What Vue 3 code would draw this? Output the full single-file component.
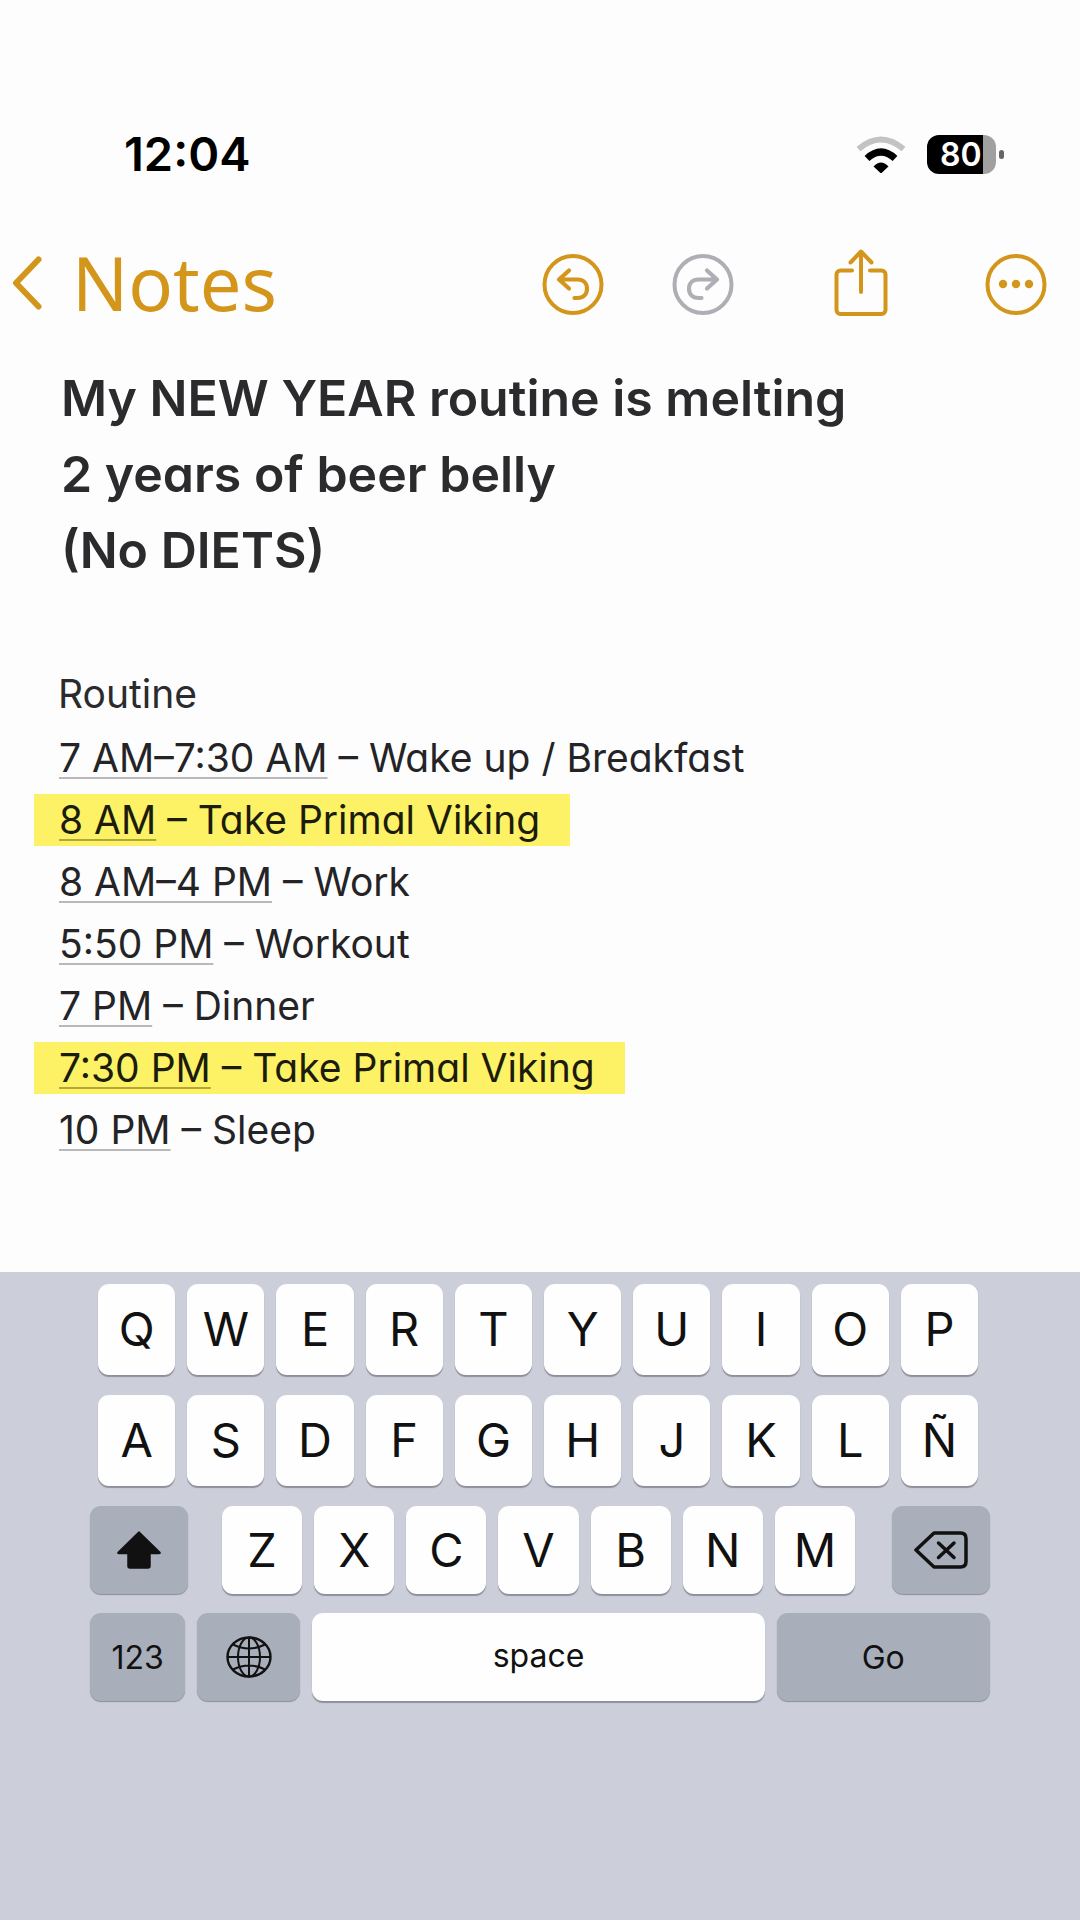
<script setup>
const titleLines = ['My NEW YEAR routine is melting', '2 years of beer belly', '(No DIETS)']

const routine = [
  { time: '7 AM–7:30 AM', task: 'Wake up / Breakfast' },
  { time: '8 AM', task: 'Take Primal Viking', marked: true },
  { time: '8 AM–4 PM', task: 'Work' },
  { time: '5:50 PM', task: 'Workout' },
  { time: '7 PM', task: 'Dinner' },
  { time: '7:30 PM', task: 'Take Primal Viking', marked: true },
  { time: '10 PM', task: 'Sleep' },
]

const fullRows = ['QWERTYUIOP', 'ASDFGHJKLÑ']
const shortRow = 'ZXCVBNM'
</script>

<template>
  <div class="screen">
    <header class="status">
      <time class="clock">12:04</time>
      <div class="indicators">
        <svg class="wifi" viewBox="0 0 50 37" aria-label="Wi-Fi">
          <path d="M2.500 13Q25-6 47.500 13" fill="none" stroke="#c3c3c5" stroke-width="6" />
          <path d="M11 22.500Q25 9.500 39 22.500" fill="none" stroke="#000" stroke-width="7" />
          <path d="M17.500 30.500Q25 22.500 32.500 30.500L25 37.500Z" />
        </svg>
        <div class="battery">
          <span class="charge">80</span>
          <span class="nub"></span>
        </div>
      </div>
    </header>

    <nav class="toolbar">
      <a class="back" href="#notes">
        <svg class="chevron" viewBox="0 0 30 54" aria-hidden="true">
          <path d="M26.500 3.500 4 27l22.500 23.500" />
        </svg>
        <span>Notes</span>
      </a>
      <div class="actions">
        <button class="action" type="button" aria-label="Undo">
          <svg viewBox="0 0 62 68">
            <circle cx="31" cy="35.500" r="28.500" stroke-width="4" />
            <path d="M27 21.500 17 30.500l10 9M18 30.500h17.500c6 0 9.500 4 9.500 9.300s-3.500 9.200-9.500 9.200h-3" stroke-width="4.200" />
          </svg>
        </button>
        <button class="action muted" type="button" aria-label="Redo">
          <svg viewBox="0 0 62 68">
            <circle cx="31" cy="35.500" r="28.500" stroke-width="4" />
            <path d="M35 21.500 45 30.500l-10 9M44 30.500H26.500c-6 0-9.500 4-9.500 9.300s3.500 9.200 9.500 9.200h3" stroke-width="4.200" />
          </svg>
        </button>
        <button class="action share" type="button" aria-label="Share">
          <svg viewBox="0 0 62 68">
            <path d="M22 21.500H10.500a4 4 0 0 0-4 4V61a4 4 0 0 0 4 4h41a4 4 0 0 0 4-4V25.500a4 4 0 0 0-4-4H40M31 43V3M20.500 13.500 31 2.500l10.500 11" stroke-width="4" />
          </svg>
        </button>
        <button class="action" type="button" aria-label="More">
          <svg viewBox="0 0 62 68">
            <circle cx="31" cy="35.500" r="28.500" stroke-width="4" />
            <g fill="currentColor" stroke="none">
              <circle cx="18" cy="35" r="4.200" />
              <circle cx="31" cy="35" r="4.200" />
              <circle cx="44" cy="35" r="4.200" />
            </g>
          </svg>
        </button>
      </div>
    </nav>

    <main class="note">
      <h1 class="title">
        <span v-for="line in titleLines" :key="line">{{ line }}</span>
      </h1>
      <h2 class="subtitle">Routine</h2>
      <ul class="routine">
        <li v-for="item in routine" :key="item.time" :class="{ marked: item.marked }">
          <a class="when" href="#event">{{ item.time }}</a> – {{ item.task }}
        </li>
      </ul>
    </main>

    <section class="keyboard" aria-label="Keyboard">
      <div v-for="row in fullRows" :key="row" class="row letters">
        <button v-for="k in row" :key="k" class="key" type="button">{{ k }}</button>
      </div>
      <div class="row third">
        <button class="key dark edge" type="button" aria-label="Shift">
          <svg class="shift" viewBox="0 0 46 40">
            <path d="M23 2 44 22.500q.5 1-1 1H34V36q0 2-2 2H14q-2 0-2-2V23.500H3q-1.500 0-1-1Z" fill="currentColor" stroke="currentColor" stroke-width="1.500" stroke-linejoin="round" />
          </svg>
        </button>
        <div class="middle">
          <button v-for="k in shortRow" :key="k" class="key" type="button">{{ k }}</button>
        </div>
        <button class="key dark edge" type="button" aria-label="Delete">
          <svg class="delete" viewBox="0 0 54 38" fill="none" stroke="currentColor" stroke-width="3.500" stroke-linecap="round" stroke-linejoin="round">
            <path d="M20 2h26.500q5.500 0 5.500 5.500v23q0 5.500-5.500 5.500H20L2 19Z" />
            <path d="m24.500 12 15.500 14.500M40 12 24.500 26.500" />
          </svg>
        </button>
      </div>
      <div class="row bottom">
        <button class="key dark small digits" type="button">123</button>
        <button class="key dark globe" type="button" aria-label="Switch keyboard">
          <svg viewBox="0 0 46 42" fill="none" stroke="currentColor" stroke-width="2">
            <ellipse cx="23" cy="21" rx="21.500" ry="19.500" stroke-width="2.400" />
            <ellipse cx="23" cy="21" rx="11" ry="19.500" />
            <path d="M23 1.500v39M1.500 21h43M7 8.500q16 8 32 0M7 33.500q16-8 32 0" />
          </svg>
        </button>
        <button class="key small space" type="button">space</button>
        <button class="key dark small go" type="button">Go</button>
      </div>
    </section>
  </div>
</template>

<style>
body {
  margin: 0;
}
</style>

<style scoped>
.screen {
  display: flex;
  flex-direction: column;
  min-height: 100vh;
  background: #fdfdfd;
  color: #2b2b2e;
  font-family: Inter, "Liberation Sans", sans-serif;
}

button {
  margin: 0;
  padding: 0;
  border: 0;
  background: none;
  color: inherit;
  font: inherit;
}

svg {
  display: block;
}

.status {
  display: flex;
  align-items: center;
  justify-content: space-between;
  padding: 124px 76px 0 124px;
}

.clock {
  color: #000;
  font-size: 47px;
  font-weight: 600;
  line-height: 60px;
}

.indicators {
  display: flex;
  align-items: center;
  gap: 21px;
}

.wifi {
  width: 50px;
  height: 37px;
}

.battery {
  display: flex;
  align-items: center;
  gap: 3px;
}

.charge {
  box-sizing: border-box;
  width: 69px;
  padding-left: 13px;
  border-radius: 12px;
  background: linear-gradient(90deg, #000 56px, #a0a0a0 56px);
  color: #fff;
  font-size: 32px;
  font-weight: 600;
  line-height: 39px;
}

.nub {
  width: 5px;
  height: 9px;
  border-radius: 3px;
  background: #666;
}

.toolbar {
  display: flex;
  align-items: center;
  justify-content: space-between;
  margin-top: 64px;
  padding: 0 33px 0 12px;
  color: #d3951a;
}

.back {
  display: flex;
  align-items: center;
  gap: 30px;
  color: inherit;
  font-family: "Noto Sans", "Open Sans", sans-serif;
  font-size: 74px;
  line-height: 70px;
  text-decoration: none;
}

.chevron {
  width: 30px;
  height: 54px;
  fill: none;
  stroke: currentColor;
  stroke-width: 6;
  stroke-linecap: round;
  stroke-linejoin: round;
}

.actions {
  display: flex;
  gap: 68px;
}

.action svg {
  width: 62px;
  height: 68px;
  fill: none;
  stroke: currentColor;
  stroke-linecap: round;
  stroke-linejoin: round;
}

.muted {
  color: #aeaeb4;
}

.share {
  margin: 0 25px 0 28px;
}

.note {
  padding: 42px 34px 116px;
  font-feature-settings: "cv11" 1;
}

.title {
  margin: 0 0 74px;
  padding-left: 27px;
  font-size: 50px;
  font-weight: 600;
  line-height: 76px;
}

.title span {
  display: block;
}

.subtitle {
  margin: 0;
  padding-left: 24px;
  font-size: 39px;
  font-weight: 400;
  line-height: 64px;
}

.routine {
  display: flex;
  flex-direction: column;
  align-items: flex-start;
  margin: 0;
  padding: 6px 0 0;
  list-style: none;
  color: #242427;
  font-size: 39px;
  line-height: 52px;
  gap: 10px;
}

.routine li {
  padding: 0 30px 0 25px;
}

.routine .marked {
  background: #fdf266;
  color: #1c1c0c;
}

.when {
  color: inherit;
  text-decoration: underline;
  text-decoration-color: #b9b9bc;
  text-decoration-thickness: 2px;
  text-underline-offset: 5px;
  text-decoration-skip-ink: none;
}

.marked .when {
  text-decoration-color: #b0a63c;
}

.keyboard {
  display: flex;
  flex: 1;
  flex-direction: column;
  padding: 12px 90px 200px;
  background: #cccfda;
}

.row {
  display: flex;
  gap: 12px;
}

.letters {
  margin-bottom: 20px;
  padding: 0 12px 0 8px;
}

.key {
  display: flex;
  box-sizing: border-box;
  flex: 1;
  align-items: center;
  justify-content: center;
  min-width: 0;
  height: 91px;
  padding-bottom: 2px;
  border-radius: 11px;
  background: #fefefe;
  box-shadow: 0 2px 1px #8d8f9a;
  color: #111;
  font-size: 47px;
}

.third {
  gap: 34px;
  margin-bottom: 19px;
}

.third .key,
.bottom .key {
  height: 88px;
}

.middle {
  display: flex;
  flex: 1;
  gap: 12px;
  padding-right: 3px;
}

.key.dark {
  padding-bottom: 0;
  background: #a9aebb;
  box-shadow: 0 1px 1px #898d9b;
}

.key.edge {
  flex: 0 0 98px;
}

.key.small {
  font-size: 32px;
}

.shift {
  width: 46px;
  height: 40px;
}

.delete {
  width: 54px;
  height: 38px;
}

.key.digits {
  flex: 95;
}

.key.globe {
  flex: 103;
}

.key.space {
  flex: 451;
  padding-bottom: 4px;
}

.key.go {
  flex: 213;
}

.globe svg {
  width: 46px;
  height: 42px;
}
</style>
